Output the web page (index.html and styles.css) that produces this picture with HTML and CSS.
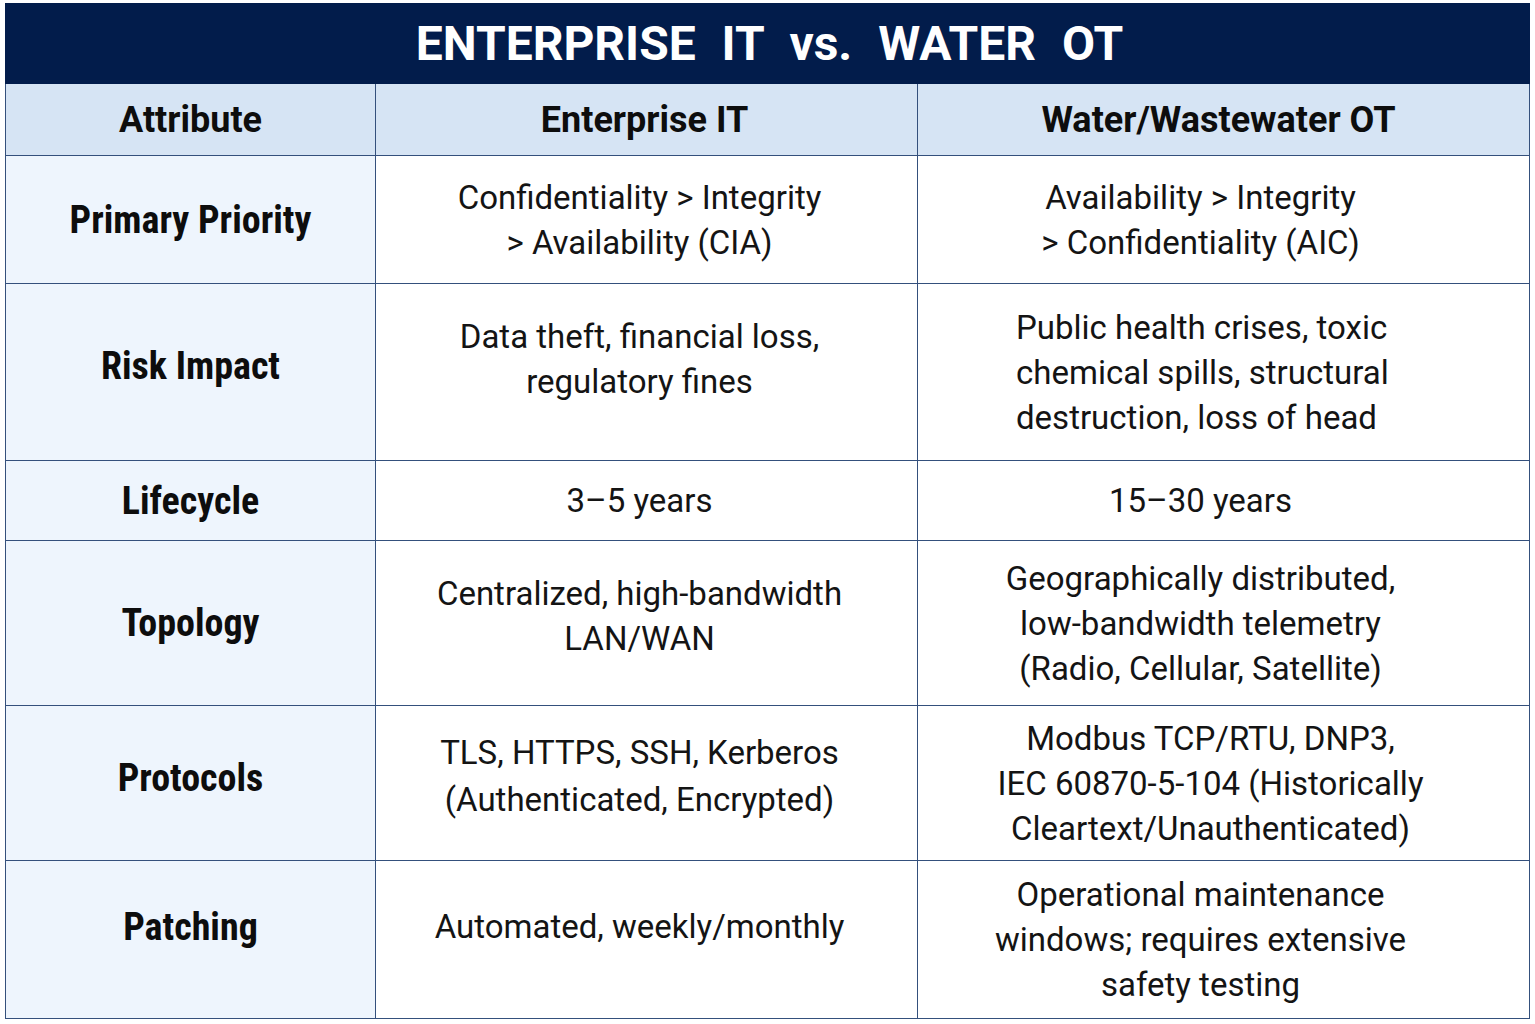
FILE: index.html
```html
<!DOCTYPE html>
<html lang="en">
<head>
<meta charset="utf-8">
<title>Enterprise IT vs. Water OT</title>
<link rel="stylesheet" href="styles.css">
</head>
<body>
<div class="page">
<table class="cmp">
  <colgroup>
    <col class="c1"><col class="c2"><col class="c3">
  </colgroup>
  <thead>
    <tr class="title-row"><th colspan="3" class="title">ENTERPRISE IT vs. WATER OT</th></tr>
    <tr class="head-row">
      <th class="h h1">Attribute</th>
      <th class="h h2">Enterprise IT</th>
      <th class="h h3">Water/Wastewater OT</th>
    </tr>
  </thead>
  <tbody>
    <tr class="r1">
      <th class="lab">Primary Priority</th>
      <td class="mid">Confidentiality &gt; Integrity<br>&gt; Availability (CIA)</td>
      <td class="rt">Availability &gt; Integrity<br>&gt; Confidentiality (AIC)</td>
    </tr>
    <tr class="r2">
      <th class="lab">Risk Impact</th>
      <td class="mid">Data theft, financial loss,<br>regulatory fines</td>
      <td class="rt left">Public health crises, toxic<br>chemical spills, structural<br>destruction, loss of head</td>
    </tr>
    <tr class="r3">
      <th class="lab">Lifecycle</th>
      <td class="mid">3–5 years</td>
      <td class="rt">15–30 years</td>
    </tr>
    <tr class="r4">
      <th class="lab">Topology</th>
      <td class="mid">Centralized, high-bandwidth<br>LAN/WAN</td>
      <td class="rt">Geographically distributed,<br>low-bandwidth telemetry<br>(Radio, Cellular, Satellite)</td>
    </tr>
    <tr class="r5">
      <th class="lab">Protocols</th>
      <td class="mid">TLS, HTTPS, SSH, Kerberos<br>(Authenticated, Encrypted)</td>
      <td class="rt">Modbus TCP/RTU, DNP3,<br>IEC 60870-5-104 (Historically<br>Cleartext/Unauthenticated)</td>
    </tr>
    <tr class="r6">
      <th class="lab">Patching</th>
      <td class="mid">Automated, weekly/monthly</td>
      <td class="rt">Operational maintenance<br>windows; requires extensive<br>safety testing</td>
    </tr>
  </tbody>
</table>
</div>
</body>
</html>
```

FILE: styles.css
```css
html, body {
  margin: 0;
  padding: 0;
  background: #ffffff;
}
.page {
  padding: 3px 6px 0 5px;
}
.cmp {
  width: 1524px;
  border-collapse: collapse;
  table-layout: fixed;
  font-family: Roboto, "Liberation Sans", Arial, sans-serif;
  color: #111111;
}
.c1 { width: 370px; }
.c2 { width: 542px; }
.c3 { width: 612px; }

.cmp th, .cmp td {
  border: 1.5px solid #34507c;
  padding: 0;
  text-align: center;
  vertical-align: middle;
}

.title-row { height: 80px; }
.head-row { height: 72px; }
.r1 { height: 128px; }
.r2 { height: 177px; }
.r3 { height: 80px; }
.r4 { height: 165px; }
.r5 { height: 155px; }
.r6 { height: 158px; }

.cmp .title {
  background: #021c4b;
  color: #ffffff;
  font-family: Roboto, "Liberation Sans", Arial, sans-serif;
  font-weight: 700;
  font-size: 48px;
  word-spacing: 14px;
  border-color: #021c4b;
  padding-left: 4px;
}

.cmp .head-row th {
  background: #d6e4f4;
  font-family: Roboto, "Liberation Sans", sans-serif;
  font-weight: 700;
  font-size: 36px;
  color: #0d0d0d;
}
.cmp .head-row .h2 { padding-right: 4px; }
.cmp .head-row .h3 { padding-right: 10px; }

.cmp .lab {
  background: #eef5fd;
  font-family: "Liberation Sans Narrow", "Roboto Condensed", "DejaVu Sans Condensed", Roboto, sans-serif;
  font-weight: 700;
  font-size: 38px;
  color: #0d0d0d;
}

.cmp .mid, .cmp .rt {
  font-size: 33px;
  line-height: 45px;
  font-weight: 400;
  color: #141414;
  background: #ffffff;
}
.cmp .mid { padding-right: 14px; }
.cmp .rt { padding-right: 46px; }
.cmp .rt.left { text-align: left; padding: 0 0 0 98px; }
.cmp .r5 .rt { padding-right: 26px; }

.cmp .r2 .lab { padding-bottom: 12px; }
.cmp .r2 .mid { padding-bottom: 26px; }
.cmp .r4 .mid { padding-bottom: 14px; }
.cmp .r5 .lab { padding-bottom: 10px; }
.cmp .r5 .mid { padding-bottom: 14px; line-height: 47px; }
.cmp .r6 .lab { padding-bottom: 26px; }
.cmp .r6 .mid { padding-bottom: 26px; }
```
